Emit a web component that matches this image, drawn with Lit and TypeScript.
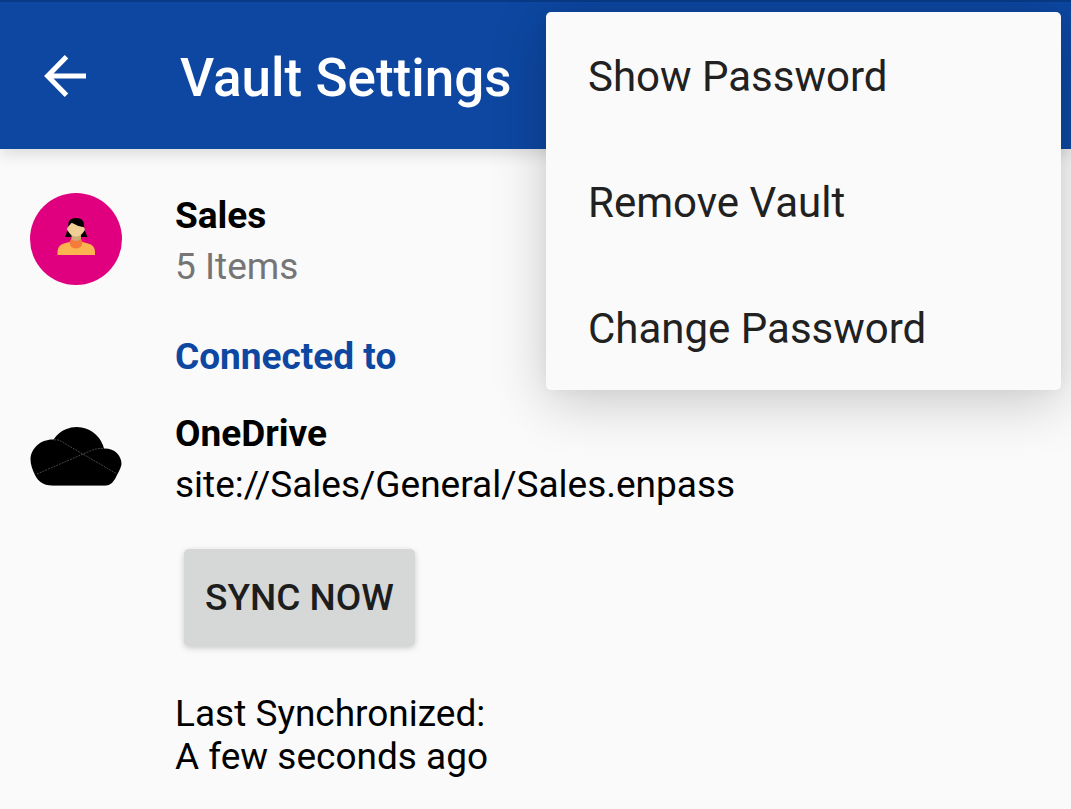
import { LitElement, html, css } from "lit";
import { customElement } from "lit/decorators.js";

@customElement("app-root")
export class AppRoot extends LitElement {
  static styles = css`
    :host {
      display: block;
      position: relative;
      min-height: 100vh;
      background: #fafafa;
      color: #000;
      font: 400 37px/43px Roboto, sans-serif;
      overflow: hidden;
    }
    button {
      font: inherit;
      border: 0;
      cursor: pointer;
    }
    h1, h2, h3, p {
      margin: 0;
      font-size: inherit;
    }
    .bar {
      display: flex;
      align-items: center;
      gap: 83px;
      box-sizing: border-box;
      height: 149px;
      padding: 4px 33px 0;
      border-top: 2px solid #083a85;
      background: #0d47a1;
      color: #fff;
      box-shadow: 0 4px 16px rgba(0, 0, 0, 0.14);
    }
    .back {
      display: flex;
      padding: 9px 11px 13px;
      background: none;
      color: inherit;
    }
    .bar h1 {
      font-size: 53px;
      line-height: 62px;
      font-weight: 500;
    }
    main {
      display: grid;
      grid-template-columns: 92px 1fr;
      column-gap: 53px;
      padding: 44px 30px;
    }
    .text {
      display: flex;
      flex-direction: column;
      gap: 8px;
      padding-top: 1px;
    }
    .name {
      font-weight: 700;
    }
    .count {
      color: #757575;
    }
    .section {
      grid-column: 2;
      padding: 47px 0 33px;
      color: #0d47a1;
      font-weight: 700;
    }
    .cloud {
      padding-top: 15px;
    }
    svg {
      display: block;
    }
    .actions {
      grid-column: 2;
      padding: 43px 9px 46px;
    }
    .sync {
      padding: 27px 21px;
      border-radius: 5px;
      background: #d6d8d7;
      color: #1d1d1d;
      font-weight: 500;
      box-shadow: 0 2px 6px rgba(0, 0, 0, 0.2);
      display: block;
    }
    .status {
      grid-column: 2;
    }
    .menu {
      position: absolute;
      top: 12px;
      right: 10px;
      width: 515px;
      border-radius: 5px;
      background: #fafafa;
      box-shadow: 0 12px 56px rgba(0, 0, 0, 0.2), 0 0 14px rgba(0, 0, 0, 0.04);
    }
    .item {
      display: block;
      width: 100%;
      padding: 40px 42px 37px;
      background: none;
      color: #212121;
      font-size: 42px;
      line-height: 49px;
      text-align: left;
    }
  `;

  render() {
    return html`
      <header class="bar">
        <button class="back" aria-label="Back">
          <svg width="42" height="42" viewBox="0 0 42 42" fill="none" stroke="currentColor" stroke-width="5">
            <path d="M42 21H5M22.500 1.800L3.600 21l18.900 19.200" />
          </svg>
        </button>
        <h1>Vault Settings</h1>
      </header>
      <main>
        <svg width="92" height="92" viewBox="0 0 92 92" aria-hidden="true">
          <circle cx="46" cy="46" r="46" fill="#e0007f" />
          <path d="M38.300 32Q38 25 46 25Q54 25 54 32L54.500 37L57.500 44H35L38 36Z" fill="#000" />
          <path d="M27.500 62V58Q28 52 34 50.500L41 48.500H51L58 50.500Q64.500 52 65 58V62Z" fill="#fbb450" />
          <path d="M41 46L39.500 49Q40 55.500 46 55.500Q52 55.500 52.500 49L51 46Z" fill="#f47b3c" />
          <path d="M41.500 42H51V46Q46 50 41.500 46Z" fill="#cfaa72" />
          <path d="M41.700 29.700Q47 33 54 34.300L55 36.500L53.500 39Q50.500 43.500 46 43.500Q41.500 43.500 39 39.500L36.700 36.300L38.300 33.500Z" fill="#f0cf96" />
        </svg>
        <div class="text">
          <h2 class="name">Sales</h2>
          <p class="count">5 Items</p>
        </div>
        <h2 class="section">Connected to</h2>
        <svg class="cloud" width="92" height="62" viewBox="0 0 92 62" aria-hidden="true">
          <path d="M23.500 13.500A28 28 0 0 1 74 22.500C84 22 91.500 29 91.500 38Q91 42 87 49Q83 59 76 59.500H22C13 59.500 8 55 5 49Q0.500 40 0.500 33C1 22 11 13 23.500 13.500Z" fill="#000" />
          <path d="M24 14Q29 13 34 17L87 48M7 48L60 25Q67 22 73.500 22.500" fill="none" stroke="#484848" stroke-width="1" stroke-dasharray="2 1" />
          <path d="M22 59.500H76" stroke="#666" stroke-width="1" />
        </svg>
        <div class="text">
          <h3 class="name">OneDrive</h3>
          <p>site://Sales/General/Sales.enpass</p>
        </div>
        <div class="actions"><button class="sync">SYNC NOW</button></div>
        <p class="status">Last Synchronized:<br />A few seconds ago</p>
      </main>
      <div class="menu" role="menu">
        ${["Show Password", "Remove Vault", "Change Password"].map(
          (label) => html`<button class="item" role="menuitem">${label}</button>`
        )}
      </div>
    `;
  }
}
